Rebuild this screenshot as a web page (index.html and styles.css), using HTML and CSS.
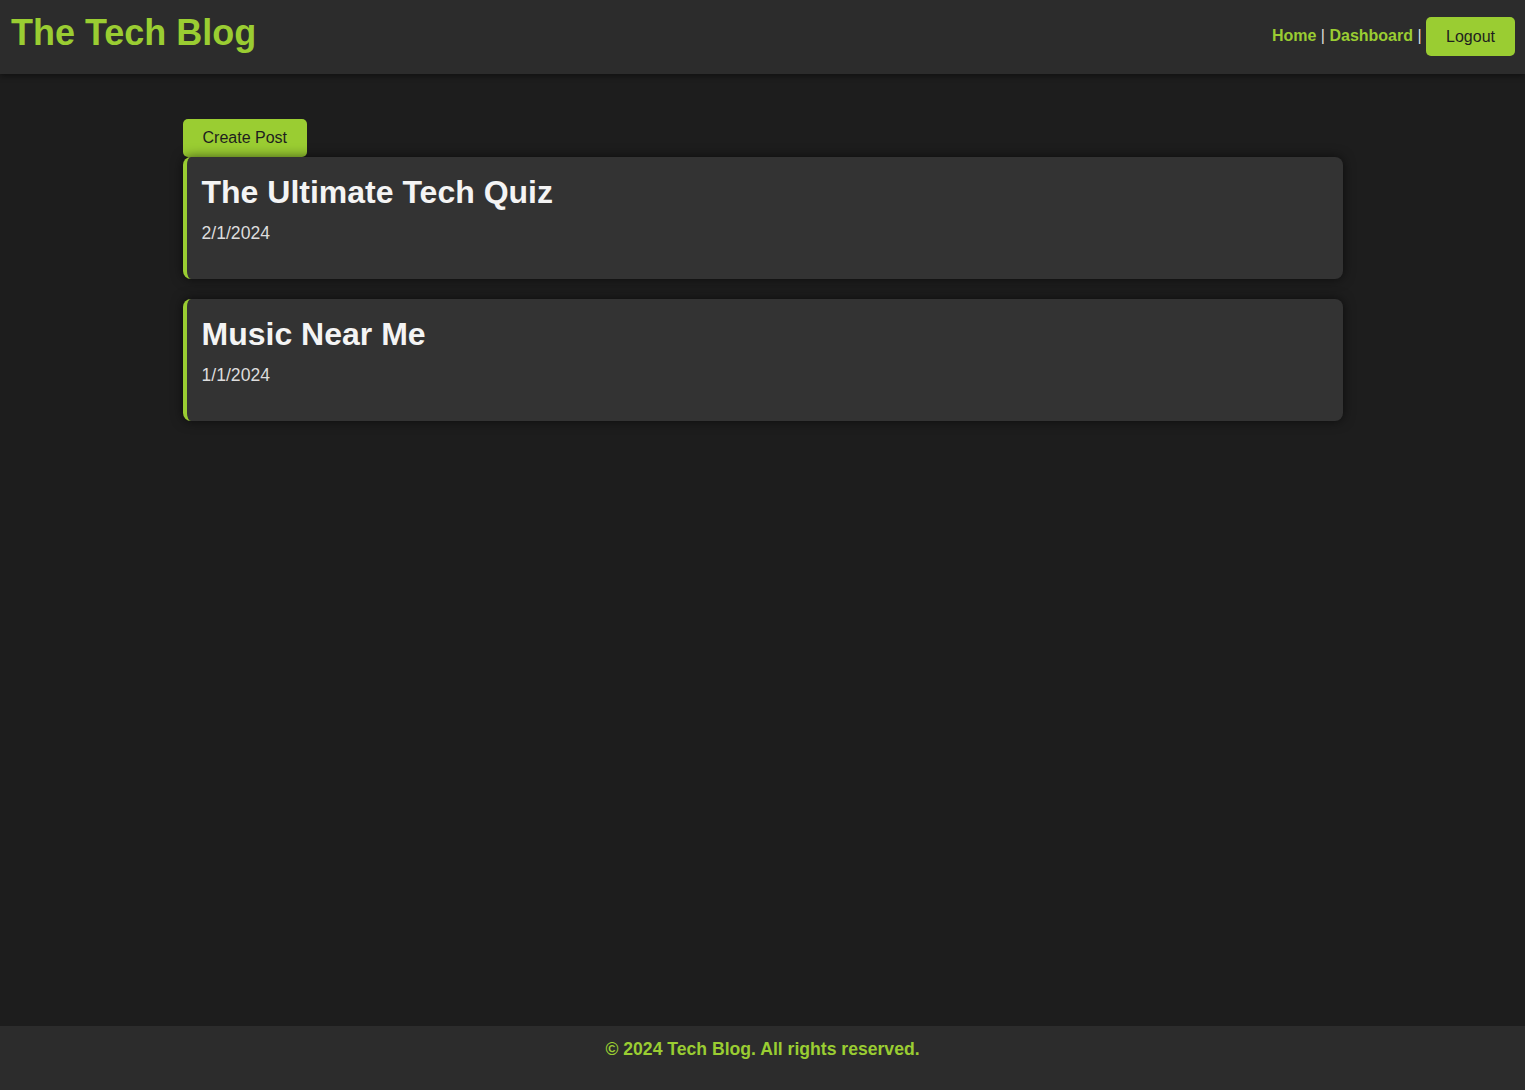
FILE: index.html
```html
<!DOCTYPE html>
<html lang="en">
<head>
<meta charset="utf-8">
<title>The Tech Blog</title>
<link rel="stylesheet" href="styles.css">
</head>
<body>
<header class="site-header">
  <h1 class="brand">The Tech Blog</h1>
  <nav class="nav">
    <a class="nav-link" href="#">Home</a> | <a class="nav-link" href="#">Dashboard</a> | <button class="btn btn-logout">Logout</button>
  </nav>
</header>
<main class="main">
  <div class="container">
    <button class="btn btn-create">Create Post</button>
    <article class="post-card">
      <h2 class="post-title">The Ultimate Tech Quiz</h2>
      <p class="post-date">2/1/2024</p>
    </article>
    <article class="post-card">
      <h2 class="post-title">Music Near Me</h2>
      <p class="post-date">1/1/2024</p>
    </article>
  </div>
</main>
<footer class="site-footer">
  <p class="footer-text">© 2024 Tech Blog. All rights reserved.</p>
</footer>
</body>
</html>
```
FILE: styles.css
```css
* { box-sizing: border-box; }
html, body { margin: 0; padding: 0; }
body {
  font-family: "Liberation Sans", Arial, sans-serif;
  background: #1d1d1d;
  color: #f0f0f0;
  min-height: 100vh;
  display: flex;
  flex-direction: column;
}
.site-header {
  height: 74px;
  background: #2c2c2c;
  display: flex;
  justify-content: space-between;
  align-items: flex-start;
  padding: 0 10px 0 11px;
  box-shadow: 0 2px 6px rgba(0,0,0,0.45);
  position: relative;
  z-index: 1;
}
.brand {
  margin: 12px 0 0 0;
  font-size: 36px;
  font-weight: bold;
  color: #9acd32;
  line-height: normal;
}
.nav {
  margin-top: 17px;
  font-size: 16px;
  color: #dddddd;
}
.nav-link {
  color: #9acd32;
  font-weight: bold;
  text-decoration: none;
}
.btn {
  font-family: "Liberation Sans", Arial, sans-serif;
  font-size: 16px;
  background: #9acd32;
  color: #1e1e1e;
  border: none;
  border-radius: 5px;
  padding: 10px 20px;
  line-height: 18px;
  cursor: pointer;
}
.btn-logout { height: 39px; vertical-align: -1px; }
.btn-create { height: 38px; display: block; }
.main {
  flex: 1;
  padding-top: 45px;
}
.container {
  width: 1160px;
  margin: 0 auto;
}
.post-card {
  background: #333333;
  border-left: 4px solid #9acd32;
  border-radius: 8px;
  box-shadow: 0 0 12px rgba(0,0,0,0.6);
  padding: 17px 15px 34px 15px;
  margin-bottom: 20px;
  height: 122px;
}
.post-title {
  margin: 0 0 12px 0;
  font-size: 32px;
  font-weight: bold;
  color: #f4f4f4;
  line-height: normal;
}
.post-date {
  margin: 0;
  font-size: 17.6px;
  color: #dddddd;
}
.site-footer {
  height: 64px;
  background: #2c2c2c;
  text-align: center;
  padding-top: 13px;
}
.footer-text {
  margin: 0;
  font-size: 17.6px;
  font-weight: bold;
  color: #9acd32;
}
```
